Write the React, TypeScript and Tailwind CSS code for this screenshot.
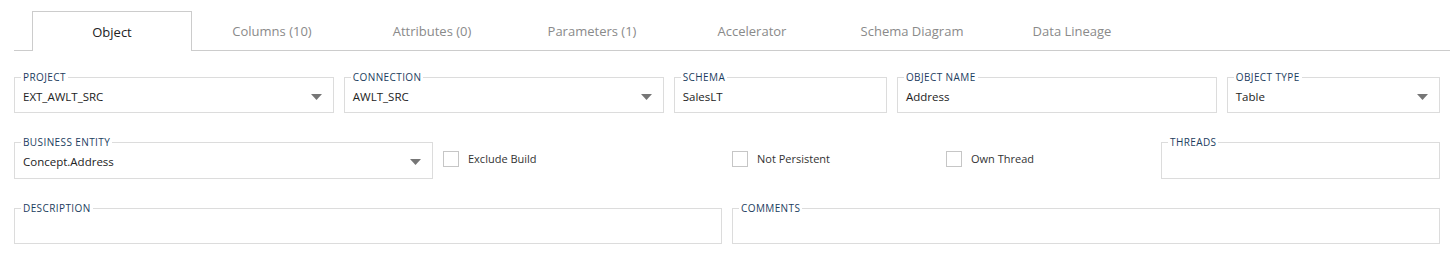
import React from "react";

const Caret = () => (
  <svg width="11" height="6" viewBox="0 0 11 6" className="shrink-0">
    <path d="M0 0h11L5.5 6z" fill="#767676" />
  </svg>
);

type FieldProps = { label: string; value?: string; select?: boolean; tall?: boolean };

function Field({ label, value, select, tall }: FieldProps) {
  return (
    <fieldset
      className={
        "min-w-0 border border-[#dcdcdc] pl-[6px] pr-[11px] pt-[6px] " +
        (tall ? "pb-[8px]" : "pb-[7px]")
      }
    >
      <legend className="px-[2px] text-[10px] leading-[12px] tracking-[0.4px] text-[#1b3d5e]">
        {label}
      </legend>
      <div className="flex h-[16px] items-center justify-between pl-[2px]">
        <span className="text-[11.5px] leading-[16px] text-[#222]">{value ?? "\u00a0"}</span>
        {select && <Caret />}
      </div>
    </fieldset>
  );
}

function Check({ label }: { label: string }) {
  return (
    <div className="flex items-center gap-[9px] pt-[3px]">
      <span className="h-[16px] w-[16px] border border-[#c6c6c6] bg-white" />
      <span className="text-[11px] text-[#333]">{label}</span>
    </div>
  );
}

const tabs = [
  "Object",
  "Columns (10)",
  "Attributes (0)",
  "Parameters (1)",
  "Accelerator",
  "Schema Diagram",
  "Data Lineage",
];

export default function App() {
  return (
    <div className="h-[271px] w-full bg-white font-['Open_Sans',sans-serif]">
      <div className="ml-[14px] mr-[4px] flex items-end border-b border-[#cccccc] pl-[18px] pt-[11px]">
        {tabs.map((t, i) =>
          i === 0 ? (
            <div
              key={t}
              className="relative -mb-px flex h-[40px] w-[160px] items-center justify-center border border-b-0 border-[#cccccc] bg-white pt-[2px] text-[13px] text-[#222]"
            >
              {t}
            </div>
          ) : (
            <div
              key={t}
              className="flex h-[39px] w-[160px] items-center justify-center pt-[2px] text-[13px] text-[#8a8a8a]"
            >
              {t}
            </div>
          )
        )}
      </div>

      <div className="px-[14px] pt-[20px]">
        <div className="grid grid-cols-[3fr_3fr_2fr_3fr_2fr] gap-x-[10px]">
          <Field label="PROJECT" value="EXT_AWLT_SRC" select />
          <Field label="CONNECTION" value="AWLT_SRC" select />
          <Field label="SCHEMA" value="SalesLT" />
          <Field label="OBJECT NAME" value="Address" />
          <Field label="OBJECT TYPE" value="Table" select />
        </div>

        <div className="mt-[23px] grid grid-cols-[419px_279px_204px_205px_1fr] gap-x-[10px]">
          <Field label="BUSINESS ENTITY" value="Concept.Address" select tall />
          <Check label="Exclude Build" />
          <Check label="Not Persistent" />
          <Check label="Own Thread" />
          <Field label="THREADS" tall />
        </div>

        <div className="mt-[23px] grid grid-cols-2 gap-x-[10px]">
          <Field label="DESCRIPTION" />
          <Field label="COMMENTS" />
        </div>
      </div>
    </div>
  );
}
